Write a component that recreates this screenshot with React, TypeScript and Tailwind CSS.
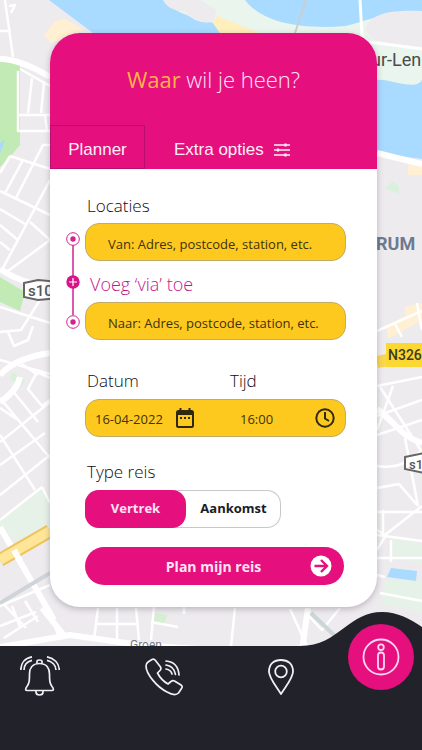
import React, { useState } from "react";

const sans = "font-['Open_Sans','Noto_Sans',sans-serif]";

function CityMap() {
  return (
    <svg
      aria-hidden="true"
      className="absolute inset-0 h-full w-full"
      viewBox="0 0 422 750"
      preserveAspectRatio="xMinYMin slice"
    >
      <rect width="422" height="750" fill="#eeebef" />
      {/* river and banks */}
      <path d="M160 0H422V90L417 87C403 83 390 80 370 77L250 60Z" fill="#eaf5ee" />
      <path d="M49 0H163C178 15 185 12 195 20C210 25 215 18 240 33L290 80H422V159L377 153L200 80L93 33Z" fill="#a9daff" />
      <path d="M210 14L240 0L300 40H225Z" fill="#eaf5ee" />
      <path d="M163 0H200L217 10L214 20C205 26 192 20 186 12C177 10 168 10 163 0Z" fill="#eeebef" />
      <path d="M217 16L257 32V40H225L213 23Z" fill="#ffefbd" />
      <path d="M200 0H422V80C415 91 395 80 370 78L300 40H257V32L217 16V10Z" fill="#eaf5ee" />
      <path d="M245 0H422V12C380 12 365 22 345 26C310 29 265 26 245 0Z" fill="#a9daff" />
      <path d="M217 16L257 32V40H225L213 23Z" fill="#ffefbd" />
      <path d="M365 30C370 10 400 10 422 11V48L376 42Z" fill="#eeebef" />
      <path d="M306 0L295 33" stroke="#c9ced2" strokeWidth="2" />
      <path d="M360 0L362 35Q366 44 378 43L422 49" fill="none" stroke="#fff" strokeWidth="3" />
      <path d="M55 21L65 19L84 30L52 43L44 35Z" fill="#fff0d3" />
      {/* parks */}
      <path d="M0 61H20V145L10 157L0 167Z" fill="#c2eab5" />
      <path d="M0 143L5 139L2 149L0 153Z" fill="#a9daff" />
      <path d="M0 277L25 292L20 311L0 302Z" fill="#c2eab5" />
      <path d="M0 520L42 487L50 497V527L18 541L0 532Z" fill="#e6f2e7" />
      <path d="M12 372L25 380L21 387L10 379Z" fill="#d9f0d9" />
      <path d="M154 613L167 615L164 626L154 622Z" fill="#d6efd3" />
      <path d="M385 188L393 181L399 187V194Z" fill="#d9f0dd" />
      <path d="M391 539L422 543V563L391 558Z" fill="#e6f2e7" />
      <path d="M385 580H422V612L382 604Z" fill="#e6f2e7" />
      <path d="M391 568L417 571L416 581L387 577Z" fill="#a9daff" />
      {/* built-up patches */}
      <path d="M408 159L422 161V175H408Z" fill="#fff0d3" />
      <path d="M386 326L405 316L405 307L422 303V320L388 339Z" fill="#fff0d3" />
      {/* local streets */}
      <g fill="none" stroke="#fff" strokeWidth="2.5" strokeLinejoin="round">
        <path d="M5 0L13 57M9 6L15 5L11 13M0 31H11" />
        <path d="M18 71V131H50M18 115H50M32 78L28 113M44 83L41 113M45 115L47 131M20 69L50 86" />
        <path d="M10 156L50 169M10 156L0 173M50 145H43L16 198M23 160L5 193M0 191L50 215M50 180L3 268M0 209L25 224M0 225L18 240M0 242L10 250M30 222L50 240L8 271M0 307L50 323M40 300L21 330L0 332M8 332L14 346L28 340L33 326M0 360L50 374M22 364L38 375M50 378L37 372L28 389L42 406L50 400" />
        <path d="M0 398L50 458M12 390L38 422M0 442L50 402M0 465L45 433M18 420L0 408M0 435L35 490M0 495L50 455M0 520L42 487M50 503L42 487" />
        <path d="M0 606L50 585M0 626L36 612M12 606L20 627M25 601L38 622M0 600L26 628M4 638L38 616M48 608L60 640M98 608L94 640M117 608V640M136 608L139 640M154 607L151 640M95 624H139M151 622L178 627M184 614V607M235 608L231 646M290 609L307 646M340 608L322 630L307 614" />
        <path d="M377 386L422 377M377 416L422 400M380 387L422 452M393 386L377 430M377 466C405 470 415 455 422 450M377 488L399 484L418 506M377 512H422M422 506L385 535L377 530M383 510V535M377 535L422 541M377 558H422M377 575L385 577M380 593L422 601M386 535L377 550M377 435L422 420M405 438L418 506M391 540V562" />
        <path d="M377 331L422 311M417 303L422 330M395 324L402 337" />
      </g>
      {/* main streets */}
      <g fill="none" stroke="#fff" strokeWidth="6">
        <path d="M0 59Q20 59 50 77M0 269Q22 284 50 287M0 375Q15 358 50 353" />
        <path d="M0 402Q17 391 20 377" />
        <path d="M377 409C397 424 402 437 422 443M377 153L422 164" />
        <path d="M0 527L54 620M42 608L66 638M0 647L70 635L140 645L211 650" />
        <path d="M308 608L302 650" />
      </g>
      <path d="M0 603L50 573" stroke="#cfd4da" strokeWidth="4" />
      <path d="M311 613L336 637" stroke="#cbd6d6" strokeWidth="4" />
      <path d="M0 560L50 531" stroke="#edc45c" strokeWidth="14" />
      <path d="M0 560L50 531" stroke="#ffe597" strokeWidth="10" />
      <path d="M14 550L20 561" stroke="#fff" strokeWidth="6" />
      <path d="M377 362L388 360" stroke="#fbd650" strokeWidth="12" />
      {/* road numbers and place names */}
      <g className="font-[Roboto,sans-serif]">
        <path d="M24 283L38 280L70 283V297L38 300L24 297Z" fill="#fff" stroke="#666" strokeWidth="2" />
        <text x="28" y="296" fontSize="15" fontWeight="500" fill="#555">s10</text>
        <path d="M405 457L425 453V473L405 469Z" fill="#fff" stroke="#666" strokeWidth="2" />
        <text x="409" y="469" fontSize="13" fontWeight="500" fill="#555">s1</text>
        <rect x="386" y="343" width="40" height="24" fill="#fcd832" />
        <text x="388" y="360" fontSize="14" fontWeight="500" fill="#3f3b20">N326</text>
        <text x="371" y="66" fontSize="18" fill="#494b4c">ur-Len</text>
        <text x="376" y="250" fontSize="18" fontWeight="700" fill="#6c7b90">RUM</text>
        <text x="130" y="649" fontSize="12" fill="#747b84">Groen</text>
      </g>
    </svg>
  );
}

function Sliders() {
  return (
    <svg width="16" height="14" viewBox="0 0 16 14" fill="none" stroke="currentColor" strokeWidth="1.4" aria-hidden="true">
      <path d="M0 2H16M0 7H16M0 12H16" />
      <path d="M11.500 .5V3.500M4 5.500V8.500M11.500 10.500V13.500" strokeWidth="2.200" />
    </svg>
  );
}

function CalendarIcon() {
  return (
    <svg width="18" height="20" viewBox="0 0 18 20" fill="none" stroke="currentColor" aria-hidden="true">
      <rect x="1" y="3" width="16" height="16" rx="1.5" strokeWidth="2" />
      <path d="M1 5H17" strokeWidth="4" />
      <path d="M4.500 0V4M13.500 0V4" strokeWidth="2" />
      <path d="M4 10H6M8 10H10M12 10H14" strokeWidth="2" />
    </svg>
  );
}

function ClockIcon() {
  return (
    <svg width="20" height="20" viewBox="0 0 20 20" fill="none" stroke="currentColor" strokeWidth="2" aria-hidden="true">
      <circle cx="10" cy="10" r="8.700" />
      <path d="M10 4V10.500L14 13" />
    </svg>
  );
}

function RouteRail() {
  return (
    <svg width="16" height="98" viewBox="0 0 16 98" fill="none" stroke="#cf2390" aria-hidden="true">
      <path d="M8 14V84" strokeWidth="1.500" />
      <circle cx="8" cy="8" r="6.300" fill="#fff" />
      <circle cx="8" cy="8" r="2.700" fill="#cf2390" stroke="none" />
      <circle cx="8" cy="51" r="6.700" fill="#d81489" stroke="none" />
      <path d="M4 51H12M8 47V55" stroke="#fff" strokeWidth="1.200" />
      <circle cx="8" cy="91" r="6.300" fill="#fff" />
      <circle cx="8" cy="91" r="2.700" fill="#cf2390" stroke="none" />
    </svg>
  );
}

function BellIcon() {
  return (
    <svg width="40" height="40" viewBox="0 0 40 40" fill="none" stroke="currentColor" strokeWidth="1.700" strokeLinejoin="round" aria-hidden="true">
      <path d="M17 7.500V5.500Q17 4 19.500 4T22 5.500V7.500" />
      <path d="M19.500 7.500C12 7.500 9.500 12.500 9.500 18C9.500 28 8.500 28 6 32Q5 34.500 7 34.500H32Q34 34.500 33 32C30.500 28 29.500 28 29.500 18C29.500 12.500 27 7.500 19.500 7.500Z" />
      <path d="M16 35V36Q16 39 19.500 39T23 36V35" />
      <path d="M12 .8C5 2 .8 7 .8 14M12 4.300C7 5.500 4 9 4 14" />
      <path d="M27 .8C34 2 39.200 7 39.200 14M27 4.300C32 5.500 36 9 36 14" />
    </svg>
  );
}

function PhoneIcon() {
  return (
    <svg width="40" height="40" viewBox="0 0 40 40" fill="none" stroke="currentColor" strokeWidth="1.700" strokeLinejoin="round" strokeLinecap="round" aria-hidden="true">
      <path d="M4 6L8 3.500Q10 2.500 11.500 4.500L16.500 11Q17.500 13 16 14.500L13.500 17Q17 24 24 28L27 25.500Q28.500 24 30.500 25L37 29Q39 30.500 37.500 32.500L34.500 37Q31 40.500 23 36C13 31 2 18 2 10Q2 7.500 4 6Z" />
      <path d="M22 5Q34 6 35 19M22 9Q30 10 31.500 18.500M22 13Q27 14 28 18" />
    </svg>
  );
}

function PinIcon() {
  return (
    <svg width="26" height="36" viewBox="0 0 26 36" fill="none" stroke="currentColor" strokeWidth="1.800" strokeLinejoin="round" aria-hidden="true">
      <path d="M13 35C8 27 1 19 1 12.500C1 5 6 1 13 1S25 5 25 12.500C25 19 18 27 13 35Z" />
      <circle cx="13" cy="12.500" r="5.800" />
    </svg>
  );
}

function InfoIcon() {
  return (
    <svg width="38" height="38" viewBox="0 0 38 38" fill="none" stroke="currentColor" strokeWidth="1.800" aria-hidden="true">
      <circle cx="19" cy="19" r="17.500" />
      <circle cx="19" cy="9.200" r="2.800" />
      <rect x="16" y="14.500" width="6" height="17" rx="3" />
    </svg>
  );
}

const labelText = "text-[17px] leading-[26px] font-light text-[#0f0b13]";
const field =
  "h-[38px] w-full rounded-[14px] border border-[#c2ab62] bg-[#fec91f] text-[13px] text-[#40320c] outline-none placeholder:text-[#40320c]";

export default function App() {
  const [kind, setKind] = useState("vertrek");
  return (
    <div className={`relative flex min-h-screen flex-col overflow-hidden ${sans}`}>
      <CityMap />

      <main className="relative mt-[33px] mr-[45px] mb-[39px] ml-[50px] overflow-hidden rounded-[30px] bg-white shadow-[0_2px_6px_rgba(60,50,70,0.3)]">
        <header className="flex h-[136px] flex-col justify-between bg-[#e50f7e]">
          <h1 className="pt-[30px] text-center text-[22px] leading-[32px] font-light text-[#ffe4f7]">
            <span className="font-normal text-[#ffb347]">Waar</span> wil je heen?
          </h1>
          <div role="tablist" className="flex h-11 font-['Liberation_Sans',Arial,sans-serif] text-[17px] text-[#ffeffa]">
            <button role="tab" aria-selected="true" className="w-[95px] border border-[#b90d72] pt-1.5">
              Planner
            </button>
            <button role="tab" aria-selected="false" className="ml-[29px] flex items-center gap-2.5 pt-1.5">
              Extra opties
              <Sliders />
            </button>
          </div>
        </header>

        <form className="pt-6 pr-[31px] pb-[22px] pl-[15px]" onSubmit={(e) => e.preventDefault()}>
          <label htmlFor="van" className={`ml-[22px] block ${labelText}`}>
            Locaties
          </label>
          <div className="mt-1 grid grid-cols-[16px_1fr] items-center gap-x-1">
            <div className="pb-1">
              <RouteRail />
            </div>
            <div>
              <input id="van" className={`${field} block pt-1 pl-[22px]`} placeholder="Van: Adres, postcode, station, etc." />
              <button type="button" className="block h-[41px] w-full pt-1.5 pl-[5px] text-left text-[18px] font-light text-[#c5168a]">
                Voeg ‘via’ toe
              </button>
              <input aria-label="Naar" className={`${field} block pt-1 pl-[22px]`} placeholder="Naar: Adres, postcode, station, etc." />
            </div>
          </div>

          <div className="pl-5">
            <div className="mt-7 grid grid-cols-[143px_1fr] pl-[2px]">
              <label htmlFor="datum" className={labelText}>
                Datum
              </label>
              <label htmlFor="tijd" className={labelText}>
                Tijd
              </label>
            </div>
            <div className={`${field} mt-[5px] flex items-center pr-2.5 pl-[9px]`}>
              <input id="datum" className="w-[81px] bg-transparent pt-1 outline-none" defaultValue="16-04-2022" />
              <button type="button" aria-label="Kies datum" className="text-[#30280c]">
                <CalendarIcon />
              </button>
              <input id="tijd" className="ml-[46px] w-0 grow bg-transparent pt-1 outline-none" defaultValue="16:00" />
              <button type="button" aria-label="Kies tijd" className="text-[#30280c]">
                <ClockIcon />
              </button>
            </div>

            <fieldset className="mt-[22px]">
              <legend className={`pl-[2px] ${labelText}`}>Type reis</legend>
              <div className="mt-[5px] flex h-[38px] w-[196px] rounded-[14px] text-[13px] font-bold shadow-[inset_0_0_0_1px_#c9c7ca]">
                {[
                  ["vertrek", "Vertrek"],
                  ["aankomst", "Aankomst"],
                ].map(([value, text]) => (
                  <label
                    key={value}
                    className="flex grow cursor-pointer items-center justify-center rounded-[14px] text-[#1d1b24] has-checked:w-[101px] has-checked:grow-0 has-checked:bg-[#e50f7e] has-checked:text-[#ffe4f4]"
                  >
                    <input
                      type="radio"
                      name="type"
                      className="sr-only"
                      checked={kind === value}
                      onChange={() => setKind(value)}
                    />
                    {text}
                  </label>
                ))}
              </div>
            </fieldset>

            <div className="pr-[2px]">
              <button
                type="submit"
                className="mt-[19px] flex h-[38px] w-full items-center rounded-full bg-[#e50f7e] pr-3 text-[14px] font-bold text-[#ffe4f4]"
              >
                <span className="grow pl-8">Plan mijn reis</span>
                <svg width="22" height="22" viewBox="0 0 22 22" aria-hidden="true">
                  <circle cx="11" cy="11" r="10.500" fill="#fff" />
                  <path d="M4.500 11H16.500M11 5L17 11L11 17" fill="none" stroke="#e50f7e" strokeWidth="2.400" />
                </svg>
              </button>
            </div>
          </div>
        </form>
      </main>

      <nav className="relative flex min-h-[104px] grow items-start bg-[#22222b] pt-2.5 pr-2 pl-5 text-[#f0eff4]">
        <svg
          aria-hidden="true"
          className="absolute right-0 bottom-full"
          width="122"
          height="34"
          viewBox="0 0 122 34"
          fill="#22222b"
        >
          <path d="M0 34C20 34 32 25 44 16C56 7 66 0 82 0C98 0 110 7 122 15V34Z" />
        </svg>
        <div className="flex grow items-start justify-between">
          <button aria-label="Meldingen">
            <BellIcon />
          </button>
          <button aria-label="Bellen">
            <PhoneIcon />
          </button>
          <button aria-label="Locatie" className="pt-[3px]">
            <PinIcon />
          </button>
        </div>
        <button
          aria-label="Informatie"
          className="relative -mt-8 ml-[54px] flex size-[66px] items-center justify-center rounded-full bg-[#e50f7e] text-[#ffd5f2]"
        >
          <InfoIcon />
        </button>
      </nav>
    </div>
  );
}
